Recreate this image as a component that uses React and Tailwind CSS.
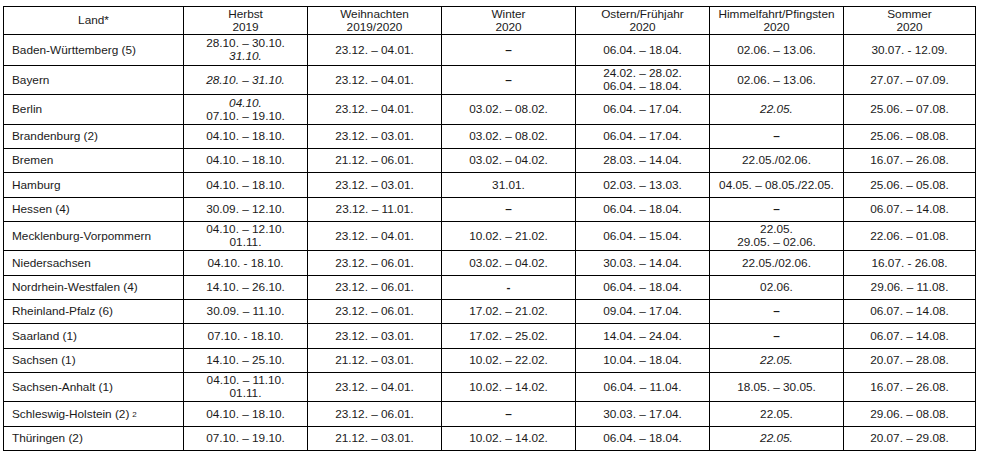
import React from 'react';

// Schulferien 2019/2020 – Übersicht nach Ländern
const COLS = [
  { w: 180, head: ['Land*'] },
  { w: 124, head: ['Herbst', '2019'] },
  { w: 134, head: ['Weihnachten', '2019/2020'] },
  { w: 134, head: ['Winter', '2020'] },
  { w: 134, head: ['Ostern/Frühjahr', '2020'] },
  { w: 134, head: ['Himmelfahrt/Pfingsten', '2020'] },
  { w: 132, head: ['Sommer', '2020'] },
];

const I = (t) => ({ t, i: true });
const NONE = { t: '–', b: true };

const ROWS = [
  { h: 31, land: 'Baden-Württemberg (5)', cells: [['28.10. – 30.10.', I('31.10.')], ['23.12. – 04.01.'], [NONE], ['06.04. – 18.04.'], ['02.06. – 13.06.'], ['30.07. - 12.09.']] },
  { h: 29, land: 'Bayern', cells: [[I('28.10. – 31.10.')], ['23.12. – 04.01.'], [NONE], ['24.02. – 28.02.', '06.04. – 18.04.'], ['02.06. – 13.06.'], ['27.07. – 07.09.']] },
  { h: 30, land: 'Berlin', cells: [[I('04.10.'), '07.10. – 19.10.'], ['23.12. – 04.01.'], ['03.02. – 08.02.'], ['06.04. – 17.04.'], [I('22.05.')], ['25.06. – 07.08.']] },
  { h: 24, land: 'Brandenburg (2)', cells: [['04.10. – 18.10.'], ['23.12. – 03.01.'], ['03.02. – 08.02.'], ['06.04. – 17.04.'], [NONE], ['25.06. – 08.08.']] },
  { h: 24, land: 'Bremen', cells: [['04.10. – 18.10.'], ['21.12. – 06.01.'], ['03.02. – 04.02.'], ['28.03. – 14.04.'], ['22.05./02.06.'], ['16.07. – 26.08.']] },
  { h: 25, land: 'Hamburg', cells: [['04.10. – 18.10.'], ['23.12. – 03.01.'], ['31.01.'], ['02.03. – 13.03.'], ['04.05. – 08.05./22.05.'], ['25.06. – 05.08.']] },
  { h: 24, land: 'Hessen (4)', cells: [['30.09. – 12.10.'], ['23.12. – 11.01.'], [NONE], ['06.04. – 18.04.'], [NONE], ['06.07. – 14.08.']] },
  { h: 29, land: 'Mecklenburg-Vorpommern', cells: [['04.10. – 12.10.', '01.11.'], ['23.12. – 04.01.'], ['10.02. – 21.02.'], ['06.04. – 15.04.'], ['22.05.', '29.05. – 02.06.'], ['22.06. – 01.08.']] },
  { h: 25, land: 'Niedersachsen', cells: [['04.10. - 18.10.'], ['23.12. – 06.01.'], ['03.02. – 04.02.'], ['30.03. – 14.04.'], ['22.05./02.06.'], ['16.07. - 26.08.']] },
  { h: 24, land: 'Nordrhein-Westfalen (4)', cells: [['14.10. – 26.10.'], ['23.12. – 06.01.'], [{ t: '-', b: true }], ['06.04. – 18.04.'], ['02.06.'], ['29.06. – 11.08.']] },
  { h: 24, land: 'Rheinland-Pfalz (6)', cells: [['30.09. – 11.10.'], ['23.12. – 06.01.'], ['17.02. – 21.02.'], ['09.04. – 17.04.'], [NONE], ['06.07. – 14.08.']] },
  { h: 25, land: 'Saarland (1)', cells: [['07.10. - 18.10.'], ['23.12. – 03.01.'], ['17.02. – 25.02.'], ['14.04. – 24.04.'], [NONE], ['06.07. – 14.08.']] },
  { h: 24, land: 'Sachsen (1)', cells: [['14.10. – 25.10.'], ['21.12. – 03.01.'], ['10.02. – 22.02.'], ['10.04. – 18.04.'], [I('22.05.')], ['20.07. – 28.08.']] },
  { h: 29, land: 'Sachsen-Anhalt (1)', cells: [['04.10. – 11.10.', '01.11.'], ['23.12. – 04.01.'], ['10.02. – 14.02.'], ['06.04. – 11.04.'], ['18.05. – 30.05.'], ['16.07. – 26.08.']] },
  { h: 25, land: 'Schleswig-Holstein (2)', sup: '2', cells: [['04.10. – 18.10.'], ['23.12. – 06.01.'], [NONE], ['30.03. – 17.04.'], ['22.05.'], ['29.06. – 08.08.']] },
  { h: 24, land: 'Thüringen (2)', cells: [['07.10. – 19.10.'], ['21.12. – 03.01.'], ['10.02. – 14.02.'], ['06.04. – 18.04.'], [I('22.05.')], ['20.07. – 29.08.']] },
];

const Line = ({ line }) => {
  if (typeof line === 'string') return <div>{line}</div>;
  return <div className={`${line.i ? 'italic' : ''} ${line.b ? 'font-bold' : ''}`}>{line.t}</div>;
};

export default function App() {
  return (
    <div className="w-[982px] h-[458px] bg-white pt-[6px] pl-[3px] text-[#1a1a1a]" style={{ fontFamily: '"Liberation Sans", Arial, sans-serif' }}>
      <table className="border-collapse table-fixed text-[11.8px] leading-[13px]" style={{ width: 972 }}>
        <colgroup>
          {COLS.map((c, i) => (
            <col key={i} style={{ width: c.w }} />
          ))}
        </colgroup>
        <thead>
          <tr className="h-[28px]">
            {COLS.map((c, i) => (
              <th key={i} className="border border-black font-normal text-center align-middle p-0">
                {c.head.map((l, j) => <div key={j}>{l}</div>)}
              </th>
            ))}
          </tr>
        </thead>
        <tbody>
          {ROWS.map((r) => (
            <tr key={r.land} style={{ height: r.h }}>
              <td className="border border-black pl-[8px] p-0 align-middle whitespace-nowrap">
                {r.land}
                {r.sup && <sup className="text-[8px] ml-[3px] relative -top-[1px]">{r.sup}</sup>}
              </td>
              {r.cells.map((cell, i) => (
                <td key={i} className="border border-black text-center align-middle p-0 whitespace-nowrap">
                  {cell.map((l, j) => <Line key={j} line={l} />)}
                </td>
              ))}
            </tr>
          ))}
        </tbody>
      </table>
    </div>
  );
}
